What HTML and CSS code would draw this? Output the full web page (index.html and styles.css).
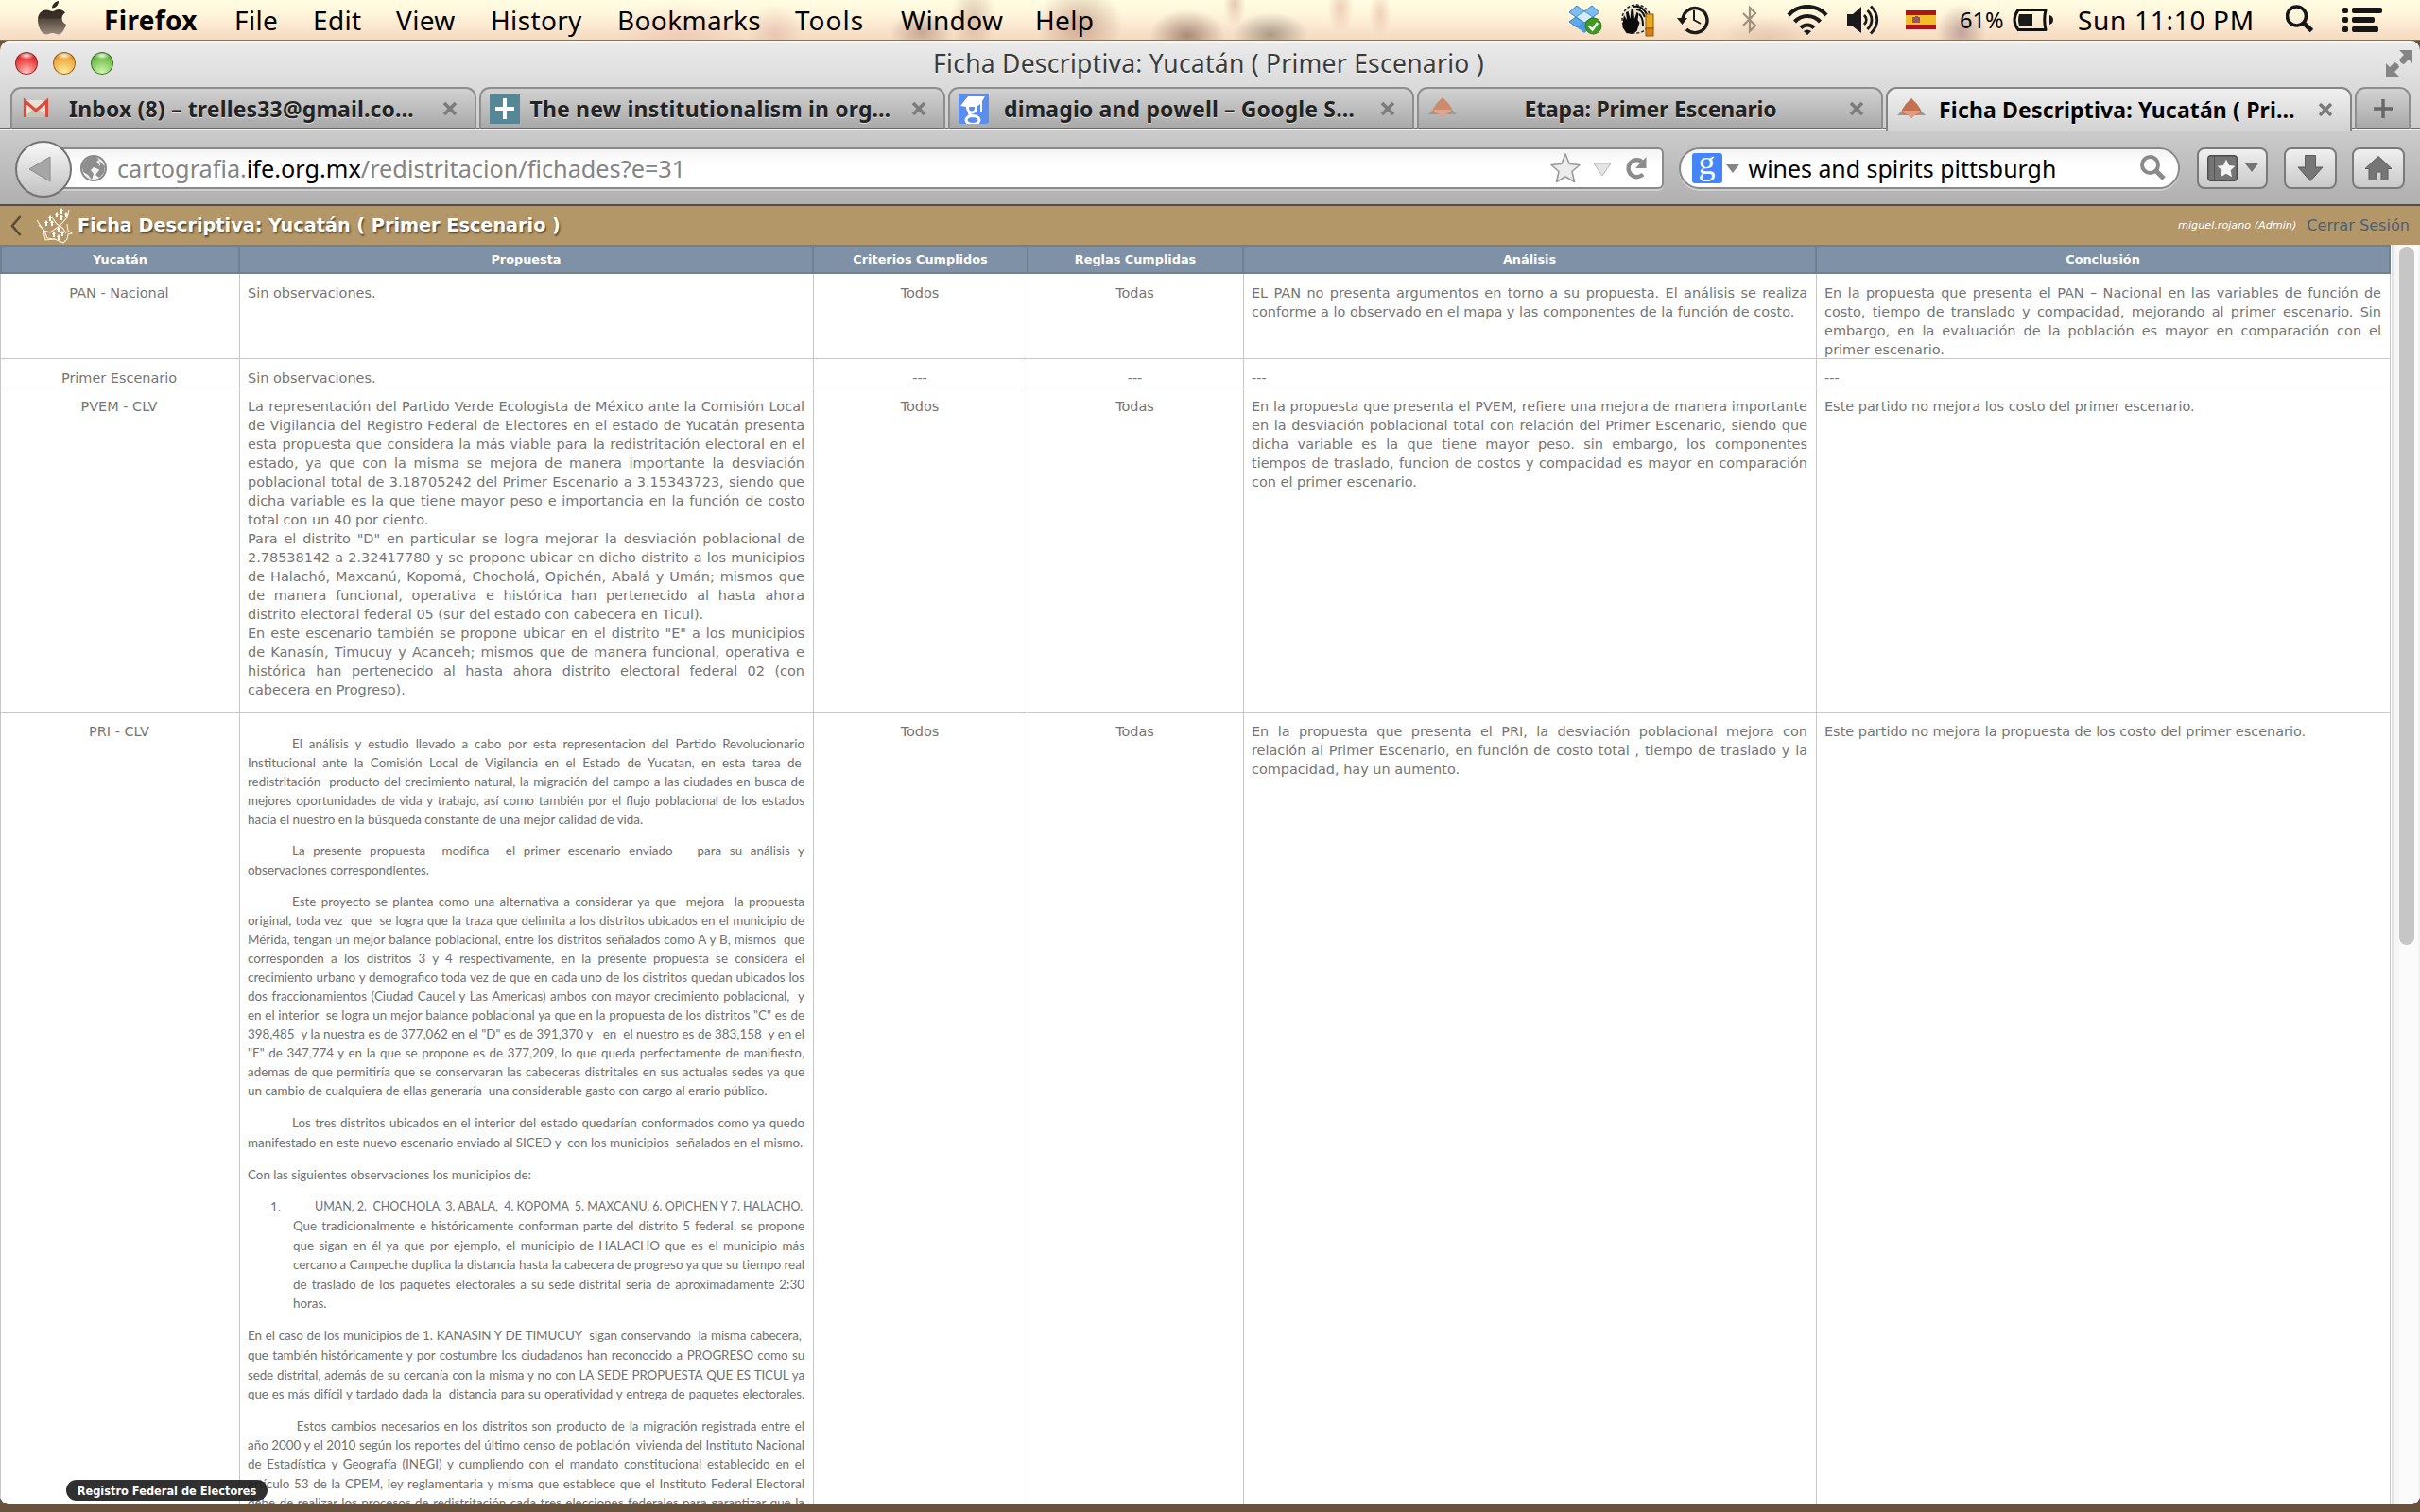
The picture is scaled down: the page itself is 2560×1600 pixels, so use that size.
FILE: index.html
```html
<!DOCTYPE html>
<html lang="es">
<head>
<meta charset="utf-8">
<title>Ficha Descriptiva: Yucatán ( Primer Escenario )</title>
<link rel="stylesheet" href="styles.css">
</head>
<body>
<header class="menubar">
  <svg class="apple" viewBox="0 0 30 36" width="30" height="36"><defs><linearGradient id="ap" x1="0" y1="0" x2="0" y2="1"><stop offset="0" stop-color="#2c231a"/><stop offset=".5" stop-color="#3a3027"/><stop offset=".55" stop-color="#55493e"/><stop offset="1" stop-color="#9a8a7c"/></linearGradient></defs><path fill="url(#ap)" d="M15 7.500C15 4 18 .5 22 0c.3 4-3 7.500-7 7.500zM29 12.500c-5 3-4.500 10 1 12.500-1.500 4.500-4.500 10.500-8 10.500-2.500 0-3.500-1.500-6.500-1.500s-4 1.500-6.500 1.500C4 35.500 0 27 0 20.500 0 13 4.500 9.500 9 9.500c3 0 4.500 1.500 6.500 1.500S19 9 22.500 9c2.500 0 5 1.200 6.500 3.500z"/></svg>
  <nav class="menus">
    <b class="m1">Firefox</b><span class="m2">File</span><span class="m3">Edit</span><span class="m4">View</span><span class="m5">History</span><span class="m6">Bookmarks</span><span class="m7">Tools</span><span class="m8">Window</span><span class="m9">Help</span>
  </nav>
  <div class="status">
    <svg class="s-drop" width="36" height="32" viewBox="0 0 36 32"><path fill="#7fbdf0" stroke="#3a83c4" d="M9 1l8 6-9 6-7-5zM25 1l-8 6 9 6 7-5z"/><path fill="#d7ecfb" stroke="#5a9fd6" d="M17 7l9 6-9 6-9-6z"/><path fill="#5da9ea" stroke="#3a83c4" d="M8 13l9 6-8 5-8-6zM26 13l-9 6 8 5 8-6z"/><path fill="#4a9be4" d="M8 23l9-4 9 4-9 7z"/><circle cx="26.500" cy="22.500" r="8.500" fill="#3f9a22" stroke="#2f7a18"/><path d="M22 22.500l3.500 4 5.500-7.500" fill="none" stroke="#fff" stroke-width="2.500"/></svg>
    <svg class="s-hand" width="36" height="36" viewBox="0 0 36 36"><circle cx="17" cy="17" r="15" fill="#e9e2d2" stroke="#222" stroke-width="1.500" stroke-dasharray="3 2"/><path fill="#0c0c0c" d="M3 18l1-5 3 5-1-8 2.500-1 2 8 1-10h2.500l1 10 2.500-7 2 1-1 7 2 3-3 9-5 3-6-1-4-6z"/><path fill="none" stroke="#111" stroke-width="2" d="M14 4q9-2 14 8M17 7q6 0 9 8M20 12q4 3 4 12"/><rect x="27" y="12" width="8" height="15" fill="#e8a91c" stroke="#8a5a08"/><rect x="27" y="27" width="8" height="8" fill="#d97d14" stroke="#8a5a08"/></svg>
    <svg class="s-time" width="34" height="32" viewBox="0 0 34 32"><path d="M6 17A13 13 0 1 1 10 26" fill="none" stroke="#1a1a1a" stroke-width="3.400"/><path d="M0 14h11l-5.500 7z" fill="#1a1a1a"/><path d="M18 6v10l7 4" fill="none" stroke="#1a1a1a" stroke-width="2"/></svg>
    <svg class="s-bt" width="16" height="30" viewBox="0 0 16 30"><path d="M1 8l13 13-6 6V2l6 6L1 21" fill="none" stroke="#a08f7f" stroke-width="2.200"/></svg>
    <svg class="s-wifi" width="44" height="32" viewBox="0 0 44 32"><g fill="none" stroke="#1a1a1a" stroke-width="4.200"><path d="M2 11c11-12 29-12 40 0"/><path d="M8.500 18c7.500-8 19.500-8 27 0"/><path d="M15 24.500c4-4 10-4 14 0"/></g><path fill="#1a1a1a" d="M18 28c2.500-2 5.500-2 8 0l-4 4z"/></svg>
    <svg class="s-vol" width="36" height="32" viewBox="0 0 36 32"><path fill="#1a1a1a" d="M0 10h6l9-8v28l-9-7H0z"/><g fill="none" stroke="#1a1a1a" stroke-width="2.800"><path d="M18 11c3 3 3 7 0 10"/><path d="M21.500 6c6 6 6 14 0 20"/><path d="M25 1.500c9 9 9 20 0 29"/></g></svg>
    <svg class="s-flag" width="32" height="20" viewBox="0 0 32 20"><path fill="#ad1519" d="M0 0h32v20H0z"/><path fill="#f2bd2a" d="M0 5h32v10H0z"/><rect x="7" y="7" width="8" height="6" fill="#c04a28"/><path fill="#7b5b8a" d="M10 6h3v7h-3z"/></svg>
    <span class="pct">61%</span>
    <svg class="s-bat" width="44" height="24" viewBox="0 0 44 24"><path d="M6 1.500h29q-2.500 10.500 0 21H6Q-2 12 6 1.500z" fill="none" stroke="#111" stroke-width="3" stroke-linejoin="round"/><path fill="#1a1a1a" d="M7 6h14v12H7q-2-6 0-12zM39 7q4 1 4 5t-4 5z"/></svg>
    <span class="clock">Sun 11:10 PM</span>
    <svg class="s-find" width="30" height="30" viewBox="0 0 30 30"><circle cx="11.500" cy="12" r="10" fill="none" stroke="#161616" stroke-width="3.600"/><path d="M18.500 19l9 8.500" stroke="#161616" stroke-width="5"/></svg>
    <svg class="s-list" width="42" height="26" viewBox="0 0 42 26" fill="#161616"><rect width="6" height="6" rx="2"/><rect y="10" width="6" height="6" rx="2"/><rect y="20" width="6" height="6" rx="2"/><rect x="10" width="32" height="6" rx="2"/><rect x="10" y="10" width="24" height="6" rx="2"/><rect x="10" y="20" width="28" height="6" rx="2"/></svg>
  </div>
</header>

<div class="window">
  <div class="titlebar">
    <div class="lights"><i class="red"></i><i class="amber"></i><i class="green"></i></div>
    <div class="wtitle">Ficha Descriptiva: Yucatán ( Primer Escenario )</div>
    <svg class="full" width="28" height="28" viewBox="0 0 28 28" fill="#858585"><path d="M14 0h14v14l-4-4-5 5q-4-1-5-5l5-5zM0 28V14l4 4 5-5q4 1 5 5l-5 5 5 5z"/></svg>
  </div>
  <div class="tabs">
    <div class="tab">
      <svg class="fav" width="32" height="32" viewBox="0 0 32 32"><path fill="#e6e2d6" d="M3 7h26v18H3z"/><path fill="#c9c4b4" d="M3 25l13-11 13 11z"/><path fill="none" stroke="#dd4b3e" stroke-width="3.200" d="M4.500 25V8L16 18 27.500 8v17"/></svg>
      <span class="tt">Inbox (8) – trelles33@gmail.co…</span>
      <svg class="x" width="16" height="16" viewBox="0 0 16 16"><path d="M2 2l12 12M14 2L2 14"/></svg>
    </div>
    <div class="tab">
      <svg class="fav" width="32" height="32" viewBox="0 0 32 32"><path fill="#568797" d="M0 0h32v32H0z"/><path fill="#fff" d="M14 5h4v9h8v4h-8v9h-4v-9H6v-4h8z"/></svg>
      <span class="tt">The new institutionalism in org…</span>
      <svg class="x" width="16" height="16" viewBox="0 0 16 16"><path d="M2 2l12 12M14 2L2 14"/></svg>
    </div>
    <div class="tab">
      <svg class="fav" width="32" height="32" viewBox="0 0 32 32"><rect width="32" height="32" rx="3" fill="#5b8def"/><path fill="#fff" d="M2 13L10 3h18l-3 5v11h-2v-8l-4 3H8z"/><ellipse cx="14" cy="15" rx="4.500" ry="5" fill="none" stroke="#fff" stroke-width="3"/><ellipse cx="15" cy="28" rx="7" ry="4.500" fill="none" stroke="#fff" stroke-width="3"/><path d="M12 19q-2 4 4 5" stroke="#fff" stroke-width="3" fill="none"/></svg>
      <span class="tt">dimagio and powell – Google S…</span>
      <svg class="x" width="16" height="16" viewBox="0 0 16 16"><path d="M2 2l12 12M14 2L2 14"/></svg>
    </div>
    <div class="tab t4">
      <svg class="fav" width="32" height="32" viewBox="0 0 32 32"><path fill="#9a9a96" d="M6 17h20l5 5H1z"/><path fill="#cd8a6c" d="M16 4l6 6 4 6v4l-7 2-3 3-3-3-7-2v-4l4-6z"/><path fill="#e0a68c" d="M7 17h18v2l-6 3-3 3-3-3-6-3z"/></svg>
      <span class="tt">Etapa: Primer Escenario</span>
      <svg class="x" width="16" height="16" viewBox="0 0 16 16"><path d="M2 2l12 12M14 2L2 14"/></svg>
    </div>
    <div class="tab on">
      <svg class="fav" width="32" height="32" viewBox="0 0 32 32"><path fill="#9a9a96" d="M6 17h20l5 5H1z"/><path fill="#c4714f" d="M16 4l6 6 4 6v4l-7 2-3 3-3-3-7-2v-4l4-6z"/><path fill="#e39b80" d="M7 17h18v2l-6 3-3 3-3-3-6-3z"/></svg>
      <span class="tt">Ficha Descriptiva: Yucatán ( Pri…</span>
      <svg class="x" width="16" height="16" viewBox="0 0 16 16"><path d="M2 2l12 12M14 2L2 14"/></svg>
    </div>
    <div class="tab plus"><svg width="20" height="20" viewBox="0 0 20 20"><path d="M10 0v20M0 10h20" stroke="#666" stroke-width="3.400"/></svg></div>
  </div>
  <div class="toolbar">
    <div class="back"><svg width="24" height="28" viewBox="0 0 24 28"><path d="M23 1v26L1 14z" fill="#a6a6a6" stroke="#8a8a8a"/></svg></div>
    <div class="url">
      <svg class="globe" width="28" height="28" viewBox="0 0 28 28"><circle cx="14" cy="14" r="13" fill="#f2f2f2" stroke="#8a8a8a" stroke-width="2"/><path fill="#8e8e8e" d="M2 9l7-7h8l3 3-3 2 3 3-1 5-5-2-3 3 3 4-2 6-4-5-5-3-1-5zM20 6l6 6-1 7-5 5-4-3 4-5-2-3 3-2z"/></svg>
      <span class="addr">cartografia.<em>ife.org.mx</em>/redistritacion/fichades?e=31</span>
      <svg class="star" width="34" height="34" viewBox="0 0 34 34"><path d="M17 2l4.200 10.500L32 13.500l-8 7 2.500 11L17 26l-9.500 5.500 2.500-11-8-7 10.800-1z" fill="#ececec" stroke="#9a9a9a" stroke-width="1.600" stroke-linejoin="round"/></svg>
      <svg class="tri" width="20" height="15" viewBox="0 0 20 15"><path d="M1 1h18l-9 13z" fill="#e4e4e4" stroke="#b5b5b5"/></svg>
      <svg class="reload" width="24" height="26" viewBox="0 0 24 26"><path d="M18 6A9 9 0 1 0 19 19.500" fill="none" stroke="#8c8c8c" stroke-width="4.400"/><path d="M22.500 1v12H11z" fill="#8c8c8c"/></svg>
    </div>
    <div class="search">
      <div class="gbox"><span>g</span></div>
      <svg class="tri2" width="14" height="9" viewBox="0 0 14 9"><path d="M0 0h14L7 9z" fill="#858585"/></svg>
      <span class="q">wines and spirits pittsburgh</span>
      <svg class="mag" width="28" height="28" viewBox="0 0 28 28"><circle cx="10.500" cy="10.500" r="8.500" fill="none" stroke="#8a8a8a" stroke-width="4"/><path d="M16 16l9 9" stroke="#8a8a8a" stroke-width="5"/></svg>
    </div>
    <div class="btn wide"><svg width="32" height="28" viewBox="0 0 32 28"><rect x=".7" y=".7" width="30.600" height="26.600" rx="3" fill="#757575" stroke="#4c4c4c" stroke-width="1.400"/><path d="M7.500 1v26" stroke="#555"/><path d="M20 4.500l3 6.500 6.500.7-4.800 4.600 1.300 7-6-3.600-6 3.600 1.300-7-4.800-4.600 6.500-.7z" fill="#f4f4f4"/></svg><svg width="14" height="9" viewBox="0 0 14 9"><path d="M0 0h14L7 9z" fill="#757575"/></svg></div>
    <div class="btn b2"><svg width="28" height="28" viewBox="0 0 28 28"><path d="M8.500.5h11V13H27L14 27.500 1 13h7.500z" fill="#767676" stroke="#5c5c5c"/></svg></div>
    <div class="btn b3"><svg width="30" height="26" viewBox="0 0 30 26"><path d="M15 .5L29 13.500h-4V25.500h-7V17h-5v8.500H5V13.500H1z" fill="#767676" stroke="#5c5c5c"/></svg></div>
  </div>

  <main class="page">
    <div class="appbar">
      <svg class="chev" width="12" height="22" viewBox="0 0 12 22"><path d="M10.500 1L2 11l8.500 10" fill="none" stroke="#5c4a30" stroke-width="2.600"/></svg>
      <svg class="logo" width="40" height="38" viewBox="0 0 40 38"><g fill="none" stroke="#f6efe2" stroke-width="1.100"><path d="M1 13l4 6 4 5 6 2 10-7 8-9 2-8M3 18l6 6 3 8 8 1M8 24l2 10 10-1 9 4 4-4 1-5 4-1-4-3-1-7M17 10l5 7 6 4 4 6"/></g><g fill="#fff"><path d="M27 0l2 3h-1v3h-2V3h-1zM22 4l2 3h-1v3h-2V7h-1zM32 4l2 3h-1v3h-2V7h-1zM27 7l2 3h-1v3h-2v-3h-1zM15 8l2 3h-1v3h-2v-3h-1zM11 13l2 3h-1v3h-2v-3h-1zM17 13l2 3h-1v3h-2v-3h-1zM24 20l2 3h-1v3h-2v-3h-1zM19 25l2 3h-1v3h-2v-3h-1zM28 24l2 3h-1v3h-2v-3h-1zM24 28l2 3h-1v3h-2v-3h-1z"/></g></svg>
      <h1>Ficha Descriptiva: Yucatán ( Primer Escenario )</h1>
      <span class="user">miguel.rojano (Admin)</span>
      <a class="logout">Cerrar Sesión</a>
    </div>
    <div class="body">
      <div class="sheet">
        <div class="row head"><div>Yucatán</div><div>Propuesta</div><div>Criterios Cumplidos</div><div>Reglas Cumplidas</div><div>Análisis</div><div>Conclusión</div></div>
        <div class="row r1">
          <div class="c">PAN - Nacional</div>
          <div>Sin observaciones.</div>
          <div class="c">Todos</div><div class="c">Todas</div>
          <div><p><span class="j">EL PAN no presenta argumentos en torno a su propuesta. El análisis se realiza</span><span>conforme a lo observado en el mapa y las componentes de la función de costo.</span></p></div>
          <div><p><span class="j">En la propuesta que presenta el PAN – Nacional en las variables de función de</span><span class="j">costo, tiempo de translado y compacidad, mejorando al primer escenario. Sin</span><span class="j">embargo, en la evaluación de la población es mayor en comparación con el</span><span>primer escenario.</span></p></div>
        </div>
        <div class="row r2">
          <div class="c">Primer Escenario</div><div>Sin observaciones.</div><div class="c">---</div><div class="c">---</div><div>---</div><div>---</div>
        </div>
        <div class="row r3">
          <div class="c">PVEM - CLV</div>
          <div><p><span class="j">La representación del Partido Verde Ecologista de México ante la Comisión Local</span><span class="j">de Vigilancia del Registro Federal de Electores en el estado de Yucatán presenta</span><span class="j">esta propuesta que considera la más viable para la redistritación electoral en el</span><span class="j">estado, ya que con la misma se mejora de manera importante la desviación</span><span class="j">poblacional total de 3.18705242 del Primer Escenario a 3.15343723, siendo que</span><span class="j">dicha variable es la que tiene mayor peso e importancia en la función de costo</span><span>total con un 40 por ciento.</span><span class="j">Para el distrito "D" en particular se logra mejorar la desviación poblacional de</span><span class="j">2.78538142 a 2.32417780 y se propone ubicar en dicho distrito a los municipios</span><span class="j">de Halachó, Maxcanú, Kopomá, Chocholá, Opichén, Abalá y Umán; mismos que</span><span class="j">de manera funcional, operativa e histórica han pertenecido al hasta ahora</span><span>distrito electoral federal 05 (sur del estado con cabecera en Ticul).</span><span class="j">En este escenario también se propone ubicar en el distrito "E" a los municipios</span><span class="j">de Kanasín, Timucuy y Acanceh; mismos que de manera funcional, operativa e</span><span class="j">histórica han pertenecido al hasta ahora distrito electoral federal 02 (con</span><span>cabecera en Progreso).</span></p></div>
          <div class="c">Todos</div><div class="c">Todas</div>
          <div><p><span class="j">En la propuesta que presenta el PVEM, refiere una mejora de manera importante</span><span class="j">en la desviación poblacional total con relación del Primer Escenario, siendo que</span><span class="j">dicha variable es la que tiene mayor peso. sin embargo, los componentes</span><span class="j">tiempos de traslado, funcion de costos y compacidad es mayor en comparación</span><span>con el primer escenario.</span></p></div>
          <div>Este partido no mejora los costo del primer escenario.</div>
        </div>
        <div class="row r4">
          <div class="c">PRI - CLV</div>
          <div class="doc">
            <p><span class="j in">El análisis y estudio llevado a cabo por esta representacion del Partido Revolucionario</span><span class="j">Institucional ante la Comisión Local de Vigilancia en el Estado de Yucatan, en esta tarea de&nbsp;</span><span class="j">redistritación&nbsp; producto del crecimiento natural, la migración del campo a las ciudades en busca de</span><span class="j">mejores oportunidades de vida y trabajo, así como también por el flujo poblacional de los estados</span><span>hacia el nuestro en la búsqueda constante de una mejor calidad de vida.</span></p>
            <p class="p2"><span class="j in">La presente propuesta&nbsp; modifica&nbsp; el primer escenario enviado&nbsp;&nbsp; para su análisis y</span><span>observaciones correspondientes.</span></p>
            <p class="p3"><span class="j in">Este proyecto se plantea como una alternativa a considerar ya que&nbsp; mejora&nbsp; la propuesta</span><span class="j">original, toda vez&nbsp; que&nbsp; se logra que la traza que delimita a los distritos ubicados en el municipio de</span><span class="j">Mérida, tengan un mejor balance poblacional, entre los distritos señalados como A y B, mismos&nbsp; que</span><span class="j">corresponden a los distritos 3 y 4 respectivamente, en la presente propuesta se considera el</span><span class="j">crecimiento urbano y demografico toda vez de que en cada uno de los distritos quedan ubicados los</span><span class="j">dos fraccionamientos (Ciudad Caucel y Las Americas) ambos con mayor crecimiento poblacional,&nbsp; y</span><span class="j">en el interior&nbsp; se logra un mejor balance poblacional ya que en la propuesta de los distritos "C" es de</span><span class="j">398,485&nbsp; y la nuestra es de 377,062 en el "D" es de 391,370 y&nbsp;&nbsp; en&nbsp; el nuestro es de 383,158&nbsp; y en el</span><span class="j">"E" de 347,774 y en la que se propone es de 377,209, lo que queda perfectamente de manifiesto,</span><span class="j">ademas de que permitiría que se conservaran las cabeceras distritales en sus actuales sedes ya que</span><span>un cambio de cualquiera de ellas generaría&nbsp; una considerable gasto con cargo al erario público.</span></p>
            <p class="p4"><span class="j in">Los tres distritos ubicados en el interior del estado quedarían conformados como ya quedo</span><span>manifestado en este nuevo escenario enviado al SICED y&nbsp; con los municipios&nbsp; señalados en el mismo.</span></p>
            <p class="p5"><span>Con las siguientes observaciones los municipios de:</span></p>
            <p class="p6"><span class="item"><b>1.</b><span class="j">UMAN, 2.&nbsp; CHOCHOLA, 3. ABALA,&nbsp; 4. KOPOMA&nbsp; 5. MAXCANU, 6. OPICHEN Y 7. HALACHO.&nbsp;</span></span><span class="j">Que tradicionalmente e históricamente conforman parte del distrito 5 federal, se propone</span><span class="j">que sigan en él ya que por ejemplo, el municipio de HALACHO que es el municipio más</span><span class="j">cercano a Campeche duplica la distancia hasta la cabecera de progreso ya que su tiempo real</span><span class="j">de traslado de los paquetes electorales a su sede distrital seria de aproximadamente 2:30</span><span>horas.</span></p>
            <p class="p7"><span class="j">En el caso de los municipios de 1. KANASIN Y DE TIMUCUY&nbsp; sigan conservando&nbsp; la misma cabecera,&nbsp;</span><span class="j">que también históricamente y por costumbre los ciudadanos han reconocido a PROGRESO como su</span><span class="j">sede distrital, además de su cercanía con la misma y no con LA SEDE PROPUESTA QUE ES TICUL ya</span><span class="j">que es más difícil y tardado dada la&nbsp; distancia para su operatividad y entrega de paquetes electorales.</span></p>
            <p class="p8"><span class="j in">&nbsp;Estos cambios necesarios en los distritos son producto de la migración registrada entre el</span><span class="j">año 2000 y el 2010 según los reportes del último censo de población&nbsp; vivienda del Instituto Nacional</span><span class="j">de Estadística y Geografía (INEGI) y cumpliendo con el mandato constitucional establecido en el</span><span class="j">artículo 53 de la CPEM, ley reglamentaria y misma que establece que el Instituto Federal Electoral</span><span class="j">debe de realizar los procesos de redistritación cada tres elecciones federales para garantizar que la</span></p>
          </div>
          <div class="c">Todos</div><div class="c">Todas</div>
          <div><p><span class="j">En la propuesta que presenta el PRI, la desviación poblacional mejora con</span><span class="j">relación al Primer Escenario, en función de costo total , tiempo de traslado y la</span><span>compacidad, hay un aumento.</span></p></div>
          <div>Este partido no mejora la propuesta de los costo del primer escenario.</div>
        </div>
      </div>
      <div class="scroll"><div class="thumb"></div></div>
    </div>
    <div class="tip">Registro Federal de Electores</div>
  </main>
</div>
</body>
</html>
```
FILE: styles.css
```css
* { box-sizing: border-box; }
body { margin: 0; width: 2560px; height: 1600px; overflow: hidden; display: flex; flex-direction: column; background: #67523d; font-family: "Noto Sans", "Open Sans", sans-serif; }
svg { display: block; flex: none; }

/* system menu bar */
.menubar { height: 43px; flex: none; display: flex; align-items: center; padding: 0 40px; border-bottom: 1px solid #8a7358; font-size: 28px; color: #000;
  background:
    radial-gradient(ellipse 34px 22px at 975px 34px, rgba(150,110,100,.5), transparent 100%),
    radial-gradient(ellipse 24px 40px at 1030px 20px, rgba(170,120,105,.4), transparent 100%),
    radial-gradient(ellipse 46px 40px at 1142px 26px, rgba(170,120,100,.55), transparent 100%),
    radial-gradient(ellipse 40px 28px at 1256px 38px, rgba(130,95,80,.65), transparent 100%),
    radial-gradient(ellipse 40px 24px at 1344px 37px, rgba(120,110,95,.6), transparent 100%),
    radial-gradient(ellipse 12px 24px at 1306px 4px, rgba(190,130,110,.4), transparent 100%),
    radial-gradient(ellipse 14px 26px at 1418px 8px, rgba(210,140,120,.4), transparent 100%),
    radial-gradient(ellipse 12px 24px at 1460px 14px, rgba(210,140,120,.35), transparent 100%),
    radial-gradient(ellipse 50px 24px at 1870px 40px, rgba(200,160,140,.35), transparent 100%),
    radial-gradient(ellipse 26px 30px at 2075px 34px, rgba(130,90,100,.45), transparent 100%),
    radial-gradient(ellipse 70px 34px at 720px 36px, rgba(220,160,160,.3), transparent 100%),
    radial-gradient(ellipse 30px 30px at 820px 34px, rgba(200,140,130,.3), transparent 100%),
    linear-gradient(#fffde2 0, #fff6dc 35%, #fae3cb 75%, #f3dcc2 100%); }
.apple { margin-top: -4px; }
.menus { display: flex; margin-left: 38px; white-space: nowrap; letter-spacing: .35px; }
.menus > * { flex: none; padding-left: 2px; }
.m1 { width: 138px; } .m2 { width: 83px; } .m3 { width: 88px; } .m4 { width: 100px; } .m5 { width: 134px; } .m6 { width: 188px; } .m7 { width: 112px; letter-spacing: 1px; } .m8 { width: 142px; } .m9 { width: 64px; }
.status { display: flex; align-items: center; margin-left: auto; white-space: nowrap; }
.s-hand { margin-left: 19px; } .s-time { margin-left: 24px; } .s-bt { margin-left: 35px; } .s-wifi { margin-left: 31px; } .s-vol { margin-left: 20px; } .s-flag { margin-left: 26px; }
.pct { width: 50px; margin-left: 25px; font-size: 23.500px; }
.s-bat { margin-left: 6px; }
.clock { width: 190px; margin-left: 25px; letter-spacing: .7px; }
.s-find { margin-left: 30px; margin-top: -2px; } .s-list { margin-left: 30px; }

/* browser window */
.window { height: 1549px; flex: none; display: flex; flex-direction: column; border-radius: 10px; overflow: hidden; background: linear-gradient(#ebebeb, #c6c6c6 110px, #b0b0b0 173px, #fff 174px); }
.titlebar { height: 48px; flex: none; display: flex; align-items: center; border-top: 2px solid #f8f8f8; padding: 0 8px 0 16px; }
.lights { display: flex; gap: 16px; width: 120px; margin-top: -2px; }
.lights i { width: 24px; height: 24px; border-radius: 50%; }
.red { background: radial-gradient(ellipse 8px 4px at 50% 16%, #ffeaea, transparent), radial-gradient(circle at 50% 90%, #ffc4c4, #ee4444 55%, #b51f22); box-shadow: inset 0 0 0 1px #8d2a2a; }
.amber { background: radial-gradient(ellipse 8px 4px at 50% 16%, #fff6e0, transparent), radial-gradient(circle at 50% 90%, #ffee9c, #f0ab42 60%, #b8701c); box-shadow: inset 0 0 0 1px #8f5a1e; }
.green { background: radial-gradient(ellipse 8px 4px at 50% 16%, #f0ffe8, transparent), radial-gradient(circle at 50% 90%, #d0f8ae, #79c052 60%, #3f8a2c); box-shadow: inset 0 0 0 1px #3d6e2c; }
.wtitle { flex: 1; text-align: center; font-size: 26.500px; letter-spacing: .25px; color: #3b3b3b; text-shadow: 0 1px 0 #fff; padding: 0 11px 3px 0; }
.full { margin-left: 92px; margin-top: -2px; }
.tabs { height: 47px; flex: none; display: flex; padding: 1px 0 0 11px; gap: 3px; background: linear-gradient(#6a6a6a, #6a6a6a) 0 44px / 100% 2px no-repeat, linear-gradient(#f2f2f2, #f2f2f2) 0 46px / 100% 1px no-repeat; }
.tab { width: 493px; height: 45px; display: flex; align-items: center; padding: 1px 18px 0 9px; border: 2px solid #8e8e8e; border-bottom: 2px solid #6a6a6a; border-radius: 11px 11px 0 0; background: linear-gradient(#d2d2d2, #a9a9a9); }
.tab.on { height: 47px; padding-bottom: 2px; border-color: #858585; border-bottom: 0; background: linear-gradient(#f0f0f0, #d2d2d2); }
.tab.plus { width: 59px; padding: 0; justify-content: center; }
.tt { flex: 1; margin-right: 11px; text-align: center; white-space: nowrap; font-weight: bold; font-size: 23px; letter-spacing: .15px; color: #232323; text-shadow: 0 1px 0 rgba(255,255,255,.6); }
.t4 .tt { letter-spacing: -.2px; padding-left: 5px; }
.on .tt { color: #000; }
.x path { stroke: #7c7c7c; stroke-width: 3.600; fill: none; }
.toolbar { height: 80px; flex: none; display: flex; align-items: center; padding: 0 16px; border-bottom: 2px solid #4c4f52; }
.back { width: 60px; height: 60px; flex: none; border-radius: 50%; border: 2px solid #727272; display: flex; align-items: center; padding-left: 12px; background: linear-gradient(#f8f8f8, #c2c2c2); z-index: 1; margin-top: 3px; }
.url { width: 1697px; height: 44px; margin: 2px 0 0 -12px; display: flex; align-items: center; padding: 0 15px 0 21px; background: linear-gradient(#f4f4f4, #fff 40%); border: 2px solid #8a8a8a; border-left: 0; border-radius: 0 6px 6px 0; box-shadow: 0 2px 0 #cfcfcf; white-space: nowrap; }
.addr { flex: 1; margin-left: 11px; font-size: 25.250px; color: #848484; }
.addr em { font-style: normal; color: #000; }
.tri { margin: 2px 14px 0 12px; }
.search { width: 531px; height: 44px; margin: 2px 0 0 16px; display: flex; align-items: center; padding: 0 12px; background: linear-gradient(#f4f4f4, #fff 40%); border: 2px solid #8a8a8a; border-radius: 22px; box-shadow: 0 2px 0 #cfcfcf; white-space: nowrap; }
.gbox { width: 32px; height: 32px; border-radius: 3px; background: #4486f8; color: #fff; font: 36px/20px "Liberation Serif", serif; text-align: center; }
.tri2 { margin-left: 4px; }
.q { flex: 1; margin-left: 10px; font-size: 24.900px; color: #000; }
.btn { width: 56px; height: 44px; margin-top: 1px; display: flex; align-items: center; justify-content: center; border: 2px solid #7a7a7a; border-radius: 8px; background: linear-gradient(#f0f0f0, #c9c9c9); }
.btn.wide { width: 75px; gap: 8px; margin-left: 18px; } .b2 { margin-left: 17px; } .b3 { margin-left: 16px; }

/* web page */
.page { flex: 1; min-height: 0; position: relative; display: flex; flex-direction: column; background: #fff; font-family: "DejaVu Sans", sans-serif; }
.appbar { height: 41px; flex: none; display: flex; align-items: center; padding: 0 11px; background: #b39768; white-space: nowrap; }
.logo { margin-left: 15px; }
.appbar h1 { flex: 1; margin: 0 0 0 4px; font-size: 19.250px; color: #fff; text-shadow: 1px 2px 2px rgba(40,30,10,.75); }
.user { font-style: italic; font-size: 11.200px; color: #fff; }
.logout { margin-left: 11px; font-size: 16.100px; color: #4b5f7b; }
.body { flex: 1; min-height: 0; display: flex; overflow: hidden; }
.sheet { width: 2529px; flex: none; }
.row { display: grid; grid-template-columns: 254px 607px 227px 228px 606px 607px; border-bottom: 1px solid #c6c6c6; }
.row > div { border-right: 1px solid #c6c6c6; padding: 10px 9px 0 8px; font-size: 14.450px; line-height: 20px; color: #757575; white-space: nowrap; overflow: hidden; }
.row > div:first-child { border-left: 1px solid #c6c6c6; }
.row > .c { text-align: center; padding-right: 10px; }
.row.head { height: 31px; border: solid #6f8093; border-width: 2px 0; }
.row.head > div { padding: 4px 0 0; line-height: 20px; background: #7f91a6; border-right: 2px solid #6f8093; color: #fff; font-weight: bold; font-size: 12.850px; text-align: center; }
.row.head > div:first-child { border-left: 2px solid #6f8093; }
.r1 { height: 90px; } .r2 { height: 30px; } .r3 { height: 344px; } .r4 { height: 860px; }
p { margin: 0; }
p > span { display: block; }
.j { text-align: justify; text-align-last: justify; }
.row > .doc { font-family: Lato, sans-serif; font-size: 13.400px; padding-top: 23px; color: #707070; }
.in { padding-left: 47px; }
.p2 { margin-top: 13px; line-height: 21px; }
.p3 { margin-top: 12px; }
.p4 { margin-top: 14px; line-height: 21px; }
.p5 { margin-top: 13px; }
.p6 { margin: 14px 0 0 48px; line-height: 20.400px; }
.p6 .item { display: flex; margin-left: -24px; }
.item b { width: 47px; flex: none; font-weight: normal; }
.item .j { flex: 1; min-width: 0; font-size: 12.500px; }
.p7 { margin-top: 14px; line-height: 20.600px; letter-spacing: -.1px; }
.p8 { margin-top: 13px; line-height: 20.300px; }
.scroll { flex: 1; margin-left: 1px; padding: 2px 0 0 8px; background: linear-gradient(90deg, #dcdcdc, #f3f3f3 10%, #fbfbfb 35%, #fbfbfb 92%, #eee); }
.thumb { width: 16px; height: 739px; border-radius: 8px; background: #c6c6c6; }
.tip { position: absolute; left: 70px; bottom: 4px; width: 213px; height: 22px; border-radius: 11px; background: rgba(25,25,25,.9); color: #fff; font-weight: bold; font-size: 11.400px; line-height: 24px; text-align: center; white-space: nowrap; }
```
